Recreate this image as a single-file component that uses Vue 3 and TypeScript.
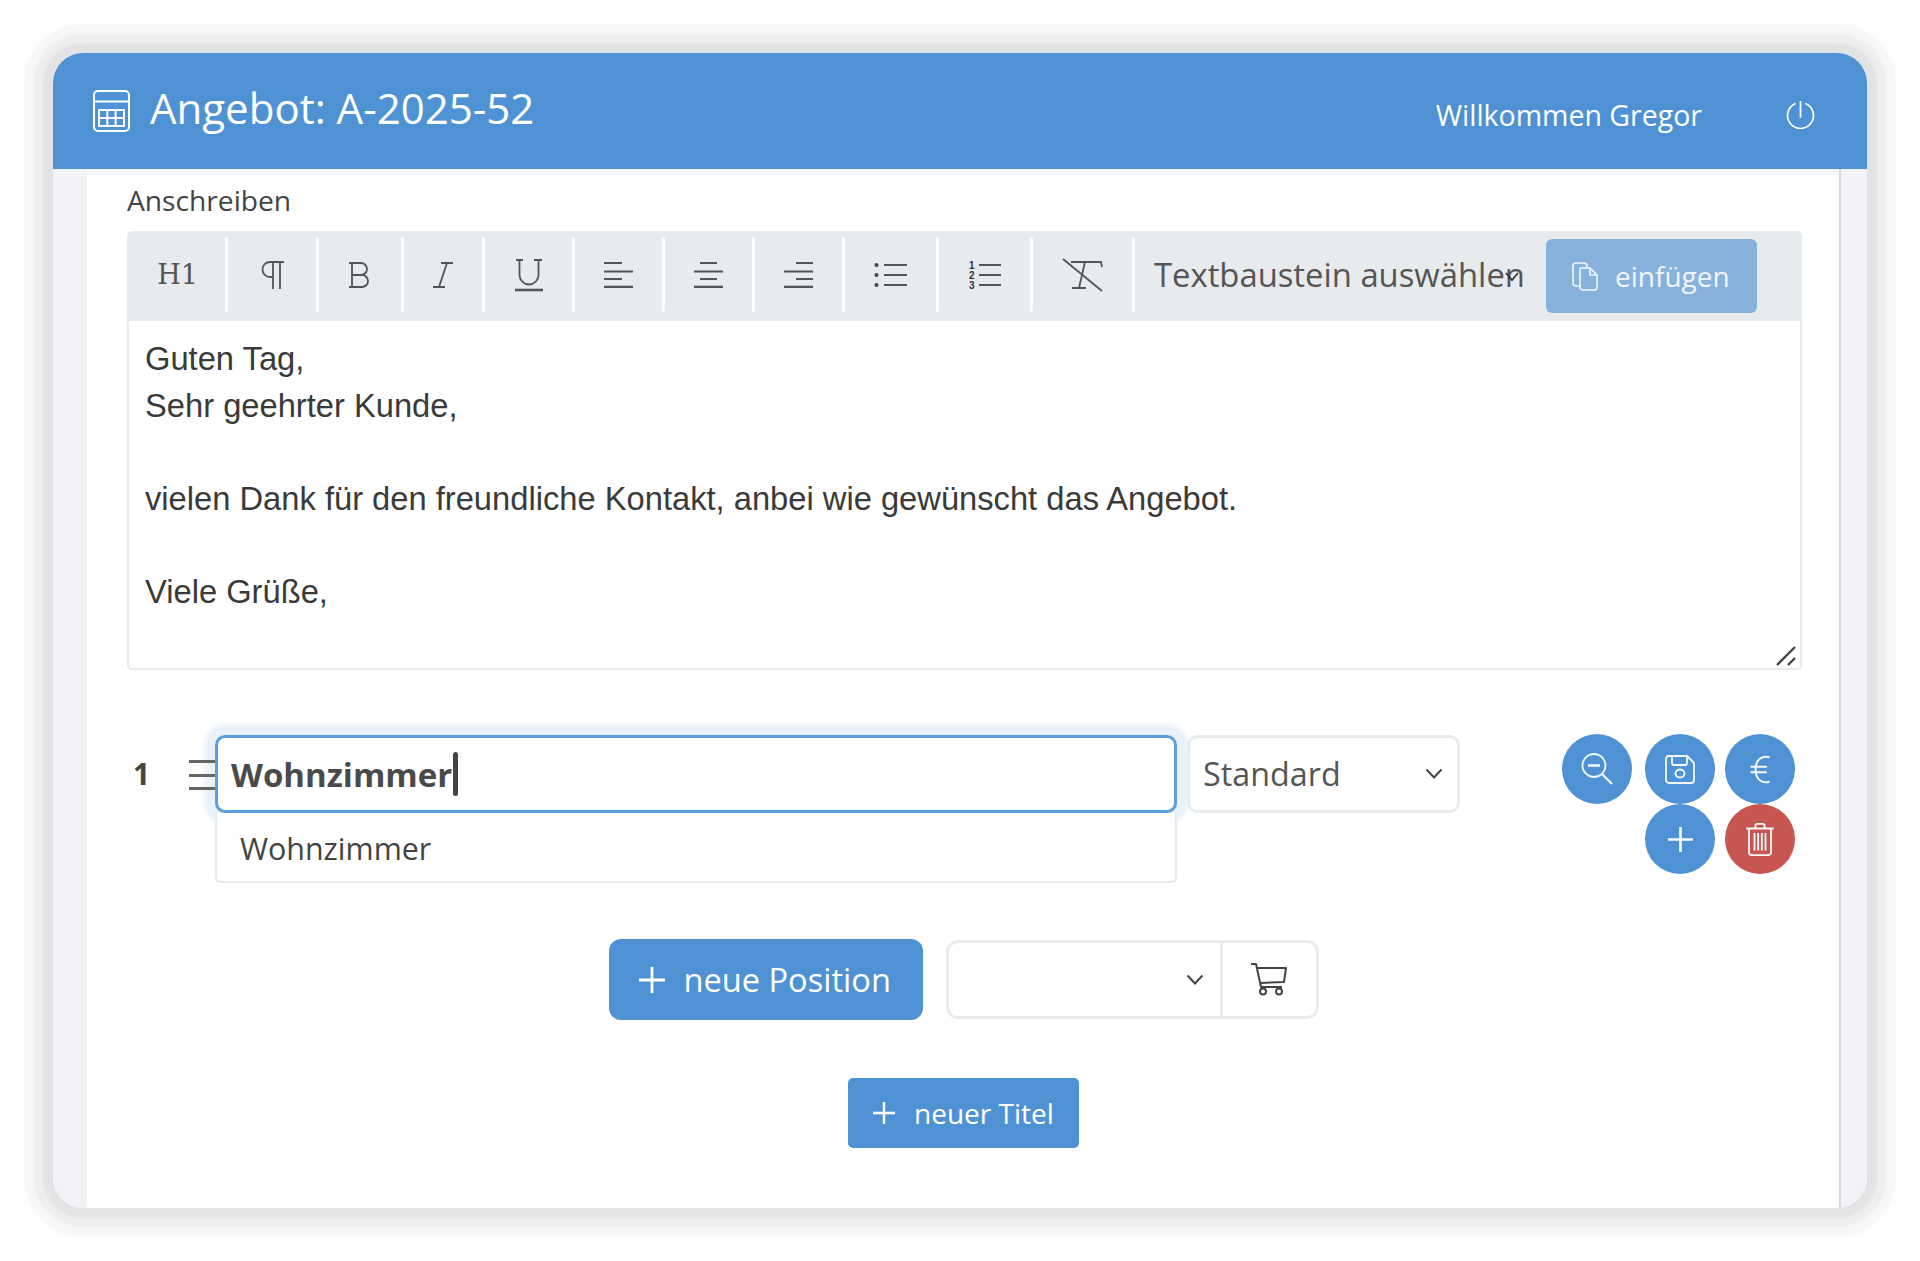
<script setup lang="ts">
const heading = 'Angebot: A-2025-52'
const lines: string[] = [
  'Guten Tag,',
  'Sehr geehrter Kunde,',
  '',
  'vielen Dank für den freundliche Kontakt, anbei wie gewünscht das Angebot.',
  '',
  'Viele Grüße,',
]
</script>

<template>
  <div class="page">
  <div class="window">
    <header class="head">
      <svg class="calc" viewBox="0 0 37 42" fill="none" stroke="currentColor" stroke-width="2">
        <rect x="1" y="1" width="35" height="40" rx="4" />
        <path d="M1 11.500h35" />
        <rect x="6" y="20" width="25" height="16" />
        <path d="M6 28h25M14.300 20v16M22.600 20v16" />
      </svg>
      <h1 class="title">{{ heading }}</h1>
      <span class="welcome">Willkommen Gregor</span>
      <svg class="power" viewBox="0 0 29 28" fill="none" stroke="currentColor" stroke-width="1.700" stroke-linecap="round">
        <path d="M9 2.700A13 13 0 1 0 20 2.700" />
        <path d="M14.500 0v16" />
      </svg>
    </header>

    <div class="frame">
      <main class="main">
        <div class="label">Anschreiben</div>

        <div class="toolbar">
          <button class="tool"><span class="h1">H1</span></button>
          <button class="tool">
            <svg width="26" height="30" viewBox="0 0 26 30" fill="none" stroke="#555" stroke-width="1.800">
              <path d="M25 2H11a7.500 7.500 0 0 0 0 15h3" />
              <path d="M14 2v27M21 2v27" />
            </svg>
          </button>
          <button class="tool">
            <svg width="26" height="28" viewBox="0 0 26 28" fill="none" stroke="#555" stroke-width="1.800">
              <path d="M2 2h4M2 26h4M5 2v24M5 2h9a6 6 0 0 1 0 12H5M5 14h10a6 6 0 0 1 0 12H5" />
            </svg>
          </button>
          <button class="tool">
            <svg width="22" height="28" viewBox="0 0 22 28" fill="none" stroke="#555" stroke-width="1.800">
              <path d="M9 2h12M1 26h12M15 2 7 26" />
            </svg>
          </button>
          <button class="tool">
            <svg width="30" height="34" viewBox="0 0 30 34" fill="none" stroke="#555" stroke-width="1.800">
              <path d="M2 2h7M20 2h8M5.500 2v15a9.500 9.500 0 0 0 19 0V2" />
              <path d="M1 32h28" stroke-width="2.600" />
            </svg>
          </button>
          <button class="tool">
            <svg class="lines" viewBox="0 0 29 26" stroke="#555" stroke-width="2">
              <path d="M0 1h18M0 9.500h29M0 17h18" />
              <path d="M0 25h29" stroke-width="2.600" />
            </svg>
          </button>
          <button class="tool">
            <svg class="lines" viewBox="0 0 29 26" stroke="#555" stroke-width="2">
              <path d="M6 1h17M0 9.500h29M6 17h17" />
              <path d="M0 25h29" stroke-width="2.600" />
            </svg>
          </button>
          <button class="tool">
            <svg class="lines" viewBox="0 0 29 26" stroke="#555" stroke-width="2">
              <path d="M12 1h17M0 9.500h29M12 17h17" />
              <path d="M0 25h29" stroke-width="2.600" />
            </svg>
          </button>
          <button class="tool">
            <svg width="33" height="24" viewBox="0 0 33 24" stroke="#555" stroke-width="2">
              <path d="M10 2h23M10 12h23M10 22h23" />
              <g fill="#444" stroke="none">
                <circle cx="2.500" cy="2" r="2" />
                <circle cx="2.500" cy="12" r="2" />
                <circle cx="2.500" cy="22" r="2" />
              </g>
            </svg>
          </button>
          <button class="tool">
            <svg width="33" height="30" viewBox="0 0 33 30" stroke="#555" stroke-width="2">
              <path d="M11 5h22M11 15h22M11 25h22" />
              <g class="nums" fill="#333" stroke="none" font-size="10" font-weight="700">
                <text x="1" y="9">1</text>
                <text x="1" y="19">2</text>
                <text x="1" y="29">3</text>
              </g>
            </svg>
          </button>
          <button class="tool">
            <svg width="42" height="34" viewBox="0 0 42 34" fill="none" stroke="#555" stroke-width="1.800">
              <path d="M9 4h30l1 5M23 4l-6 26M10 30h14" />
              <path d="M1 1l39 32" />
            </svg>
          </button>
          <div class="snippet">
            <span class="snippet-text">Textbaustein auswählen</span>
            <svg class="snippet-chevron" width="14" height="14" viewBox="0 0 14 14" fill="none" stroke="#333" stroke-width="1.800">
              <path d="M1 3l6 7 6-7" />
            </svg>
          </div>
          <button class="paste">
            <svg width="26" height="30" viewBox="0 0 26 30" fill="none" stroke="currentColor" stroke-width="1.600" stroke-linejoin="round">
              <path d="M8 25H4a3 3 0 0 1-3-3V5a3 3 0 0 1 3-3h4M8 2h4a3 3 0 0 1 3 3v2" />
              <path d="M9 7h9l7 7v12a3 3 0 0 1-3 3H11a3 3 0 0 1-3-3V8a1 1 0 0 1 1-1zM18 7v7h7" />
            </svg>
            <span>einfügen</span>
          </button>
        </div>

        <div class="editor">
          <div v-for="(line, i) in lines" :key="i" class="editor-line">{{ line }}</div>
          <svg class="grip" width="22" height="22" viewBox="0 0 22 22" stroke="#444" stroke-width="2.400">
            <path d="M2 20 20 2M13 20l7-7" />
          </svg>
        </div>

        <section class="pos">
          <div class="num">1</div>
          <div class="drag"><i></i><i></i><i></i></div>
          <div class="combo">
            <div class="combo-input">
              <span>Wohnzimmer</span><i class="caret"></i>
            </div>
            <div class="combo-menu">Wohnzimmer</div>
          </div>
          <div class="select type">
            <span>Standard</span>
            <svg width="18" height="11" viewBox="0 0 18 11" fill="none" stroke="#444" stroke-width="2">
              <path d="M1.500 1.500 9 9.500l7.500-8" />
            </svg>
          </div>
          <div class="actions">
            <button class="round">
              <svg width="32" height="32" viewBox="0 0 32 32" fill="none" stroke="currentColor" stroke-width="1.800">
                <circle cx="13" cy="12.500" r="11.500" />
                <path d="M7 12.500h12" stroke-width="2.600" />
                <path d="M21 21l10 10" stroke-width="2.200" />
              </svg>
            </button>
            <button class="round">
              <svg width="30" height="29" viewBox="0 0 30 29" fill="none" stroke="currentColor" stroke-width="1.800" stroke-linejoin="round">
                <path d="M4 1h18l7 7v17a3 3 0 0 1-3 3H4a3 3 0 0 1-3-3V4a3 3 0 0 1 3-3z" />
                <path d="M7 1v7a2 2 0 0 0 2 2h11a2 2 0 0 0 2-2V1" />
                <ellipse cx="15" cy="18.500" rx="4.500" ry="4" />
              </svg>
            </button>
            <button class="round">
              <svg width="21" height="29" viewBox="0 0 22 32" fill="none" stroke="currentColor" stroke-width="2.200">
                <path d="M21 2.500C13 0 5.500 5 5.500 16S13 32 21 29.500" />
                <path d="M0 13h18M0 19h18" />
              </svg>
            </button>
            <span></span>
            <button class="round">
              <svg width="25" height="25" viewBox="0 0 26 26" stroke="currentColor" stroke-width="2.800">
                <path d="M13 0v26M0 13h26" />
              </svg>
            </button>
            <button class="round red">
              <svg width="28" height="33" viewBox="0 0 30 36" fill="none" stroke="currentColor" stroke-width="2">
                <path d="M0 6h30M10 6V3a2 2 0 0 1 2-2h6a2 2 0 0 1 2 2v3" />
                <path d="M3 6v26a3 3 0 0 0 3 3h18a3 3 0 0 0 3-3V6" />
                <path d="M9 11v19M13 11v19M17 11v19M21 11v19" />
              </svg>
            </button>
          </div>
        </section>

        <div class="adders">
          <button class="btn big">
            <svg width="26" height="26" viewBox="0 0 26 26" stroke="currentColor" stroke-width="2.800">
              <path d="M13 0v26M0 13h26" />
            </svg>
            <span>neue Position</span>
          </button>
          <div class="articles">
            <div class="article-select">
              <svg width="18" height="11" viewBox="0 0 18 11" fill="none" stroke="#444" stroke-width="2">
                <path d="M1.500 1.500 9 9.500l7.500-8" />
              </svg>
            </div>
            <div class="cart">
              <svg width="36" height="33" viewBox="0 0 36 33" fill="none" stroke="#444" stroke-width="2" stroke-linejoin="round">
                <path d="M0 1h5l5 23h21" />
                <path d="M6 5h29l-2 14-24 1" />
                <circle cx="12" cy="28.500" r="3" />
                <circle cx="28" cy="28.500" r="3" />
              </svg>
            </div>
          </div>
        </div>

        <div class="adders title-add">
          <button class="btn small">
            <svg width="22" height="22" viewBox="0 0 22 22" stroke="currentColor" stroke-width="2.400">
              <path d="M11 0v22M0 11h22" />
            </svg>
            <span>neuer Titel</span>
          </button>
        </div>
      </main>
    </div>
  </div>
  </div>
</template>

<style scoped>
.page {
  height: 1261px;
  box-sizing: border-box;
  padding-top: 53px;
  overflow: hidden;
  background: #fefefe;
}
.window {
  width: 1814px;
  height: 1155px;
  margin: 0 auto;
  display: flex;
  flex-direction: column;
  overflow: hidden;
  border-radius: 30px;
  background: #f2f3f7;
  box-shadow:
    0 0 3px 10px #e3e3e3,
    0 0 3px 19px #eeeeee,
    0 0 3px 29px #f7f7f7;
  font-family: "Open Sans", sans-serif;
}
.head {
  height: 116px;
  flex: none;
  display: flex;
  align-items: center;
  padding: 0 52px 0 40px;
  background: #4f92d4;
  color: #fff;
}
.calc {
  width: 37px;
  height: 42px;
  margin-right: 20px;
}
.title {
  margin: -6px 0 0;
  font-size: 42px;
  font-weight: 400;
  line-height: 56px;
}
.welcome {
  margin: 8px 0 0 auto;
  font-size: 28.500px;
  font-weight: 400;
  line-height: 40px;
}
.power {
  width: 29px;
  height: 28px;
  margin: 8px 0 0 84px;
}
.frame {
  flex: 1;
  display: flex;
  padding: 0 26px 0 34px;
}
.main {
  flex: 1;
  padding: 14px 37px 0 40px;
  background: #fff;
  border-right: 2px solid #d8dade;
  box-shadow: inset 0 6px 0 #f4f6f9;
}
.label {
  height: 48px;
  font-size: 28.200px;
  line-height: 34px;
  color: #444;
}
.toolbar {
  height: 90px;
  display: grid;
  grid-template-columns: 101px 91px 85px 81px 90px 90px 90px 90px 94px 94px 102px 411px auto;
  align-items: start;
  padding-top: 6px;
  box-sizing: border-box;
  background: #e8ebee;
  border-radius: 5px 5px 0 0;
}
.tool {
  height: 75px;
  display: flex;
  align-items: center;
  justify-content: center;
  padding: 0;
  background: none;
  border: 0;
  border-right: 3px solid #fff;
  border-radius: 2px;
  color: #555;
}
.h1 {
  padding-left: 3px;
  font-family: "DejaVu Serif", serif;
  font-size: 27px;
  color: #555;
}
.lines {
  width: 29px;
  height: 26px;
}
.nums {
  font-family: "Liberation Sans", sans-serif;
}
.snippet {
  height: 75px;
  position: relative;
  display: flex;
  align-items: center;
  padding-left: 19px;
  overflow: hidden;
  font-size: 32.800px;
  color: #555;
}
.snippet-text {
  white-space: nowrap;
}
.snippet-chevron {
  position: absolute;
  left: 370px;
  top: 33px;
}
.paste {
  width: 211px;
  height: 74px;
  margin-top: 2px;
  display: flex;
  align-items: center;
  gap: 17px;
  padding: 0 0 0 26px;
  border: 0;
  border-radius: 6px;
  background: #86b2dc;
  color: #f2f6fb;
  font: 400 28px "Open Sans", sans-serif;
}
.editor {
  height: 349px;
  position: relative;
  box-sizing: border-box;
  padding: 15px 16px 0;
  background: #fff;
  border: 2px solid #e8ebee;
  border-top: 0;
  border-radius: 0 0 5px 5px;
  font: 32.700px/46.500px "Liberation Sans", sans-serif;
  color: #3a3a3a;
}
.editor-line {
  height: 46.500px;
}
.grip {
  position: absolute;
  right: 3px;
  bottom: 1px;
}
.pos {
  height: 140px;
  margin: 65px 7px 0 0;
  display: flex;
  align-items: flex-start;
}
.num {
  width: 56px;
  padding-left: 6px;
  font-size: 30px;
  font-weight: 700;
  line-height: 78px;
  color: #444;
}
.drag {
  width: 26px;
  margin-top: 25px;
  display: flex;
  flex-direction: column;
  gap: 10.500px;
  flex: none;
  position: relative;
  z-index: 1;
}
.drag i {
  height: 3px;
  background: #666;
}
.combo {
  width: 962px;
  position: relative;
  flex: none;
}
.combo-input {
  height: 78px;
  box-sizing: border-box;
  display: flex;
  align-items: center;
  padding-left: 13px;
  background: #fff;
  border: 3px solid #5b9ddd;
  border-radius: 10px;
  box-shadow: 0 0 5px 11px #e9f1fa;
  position: relative;
  font-size: 33px;
  font-weight: 700;
  color: #4a4a4a;
}
.caret {
  width: 5px;
  height: 44px;
  margin-left: 1px;
  border-radius: 3px;
  background: #444;
}
.combo-menu {
  position: absolute;
  top: 78px;
  left: 0;
  right: 0;
  height: 70px;
  box-sizing: border-box;
  padding-left: 23px;
  background: #fff;
  border: 2px solid #e8ebee;
  border-top: 0;
  border-radius: 0 0 5px 5px;
  font-size: 30.400px;
  line-height: 71px;
  color: #444;
}
.select {
  box-sizing: border-box;
  height: 78px;
  display: flex;
  align-items: center;
  justify-content: space-between;
  background: #fff;
  border: 3px solid #e9ecef;
  border-radius: 10px;
}
.type {
  width: 273px;
  margin-left: 10px;
  flex: none;
  padding: 0 14px 2px 13px;
  position: relative;
  font-size: 32.300px;
  color: #555;
}
.actions {
  margin: -1px 0 0 auto;
  display: grid;
  grid-template-columns: 83px 80px 70px;
  grid-auto-rows: 70px;
}
.round {
  width: 70px;
  height: 70px;
  padding: 0;
  display: flex;
  align-items: center;
  justify-content: center;
  border: 0;
  border-radius: 50%;
  background: #4f92d4;
  color: #f4f8fc;
}
.red {
  background: #c75650;
}
.adders {
  margin-top: 64px;
  display: flex;
  justify-content: center;
  gap: 23px;
  padding-right: 2px;
}
.title-add {
  margin-top: 58px;
}
.btn {
  display: flex;
  align-items: center;
  border: 0;
  background: #4f92d4;
  color: #fff;
  font-family: "Open Sans", sans-serif;
}
.big {
  width: 314px;
  height: 81px;
  padding: 0 0 0 30px;
  gap: 19px;
  border-radius: 12px;
  font-size: 32.600px;
}
.small {
  width: 231px;
  height: 70px;
  padding: 0 0 0 25px;
  gap: 19px;
  border-radius: 5px;
  font-size: 28px;
}
.articles {
  width: 373px;
  height: 79px;
  box-sizing: border-box;
  margin-top: 1px;
  display: flex;
  border: 3px solid #e9ecef;
  border-radius: 12px;
}
.article-select {
  width: 274px;
  flex: none;
  display: flex;
  align-items: center;
  justify-content: flex-end;
  padding-right: 16px;
  box-sizing: border-box;
  border-right: 3px solid #e9ecef;
}
.cart {
  flex: 1;
  display: flex;
  align-items: center;
  justify-content: center;
}
</style>

<style>
html,
body {
  margin: 0;
  background: #fefefe;
}
</style>
